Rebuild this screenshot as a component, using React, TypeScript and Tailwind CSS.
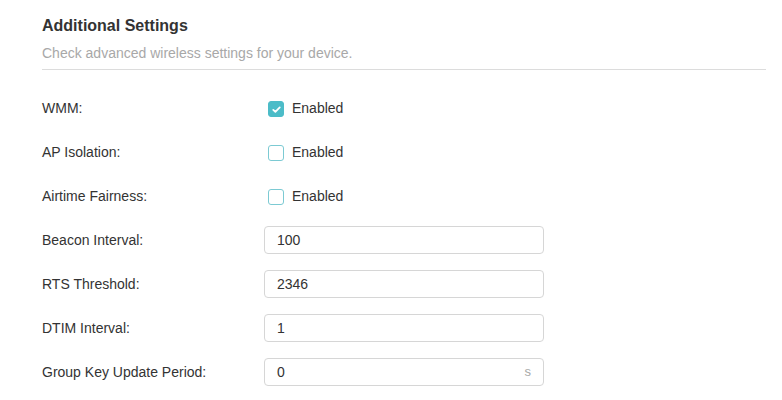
import React, { useState } from 'react';

type Field = { label: string; value: string; unit?: string };

const fields: Field[] = [
  { label: 'Beacon Interval:', value: '100' },
  { label: 'RTS Threshold:', value: '2346' },
  { label: 'DTIM Interval:', value: '1' },
  { label: 'Group Key Update Period:', value: '0', unit: 's' },
];

function Checkbox({ checked, onChange }: { checked: boolean; onChange: () => void }) {
  return (
    <button
      type="button"
      onClick={onChange}
      className={`ml-1 mt-[2px] flex h-4 w-4 items-center justify-center rounded-[3px] border ${
        checked ? 'border-[#4cbcc8] bg-[#4cbcc8]' : 'border-[#7ccad3] bg-white'
      }`}
    >
      {checked && (
        <svg viewBox="0 0 16 16" className="h-[13px] w-[13px]" fill="none" stroke="white" strokeWidth="2.2" strokeLinecap="round" strokeLinejoin="round">
          <path d="M4 8.4l2.6 2.4L12 5.4" />
        </svg>
      )}
    </button>
  );
}

export default function App() {
  const [toggles, setToggles] = useState({ wmm: true, ap: false, airtime: false });
  const [values, setValues] = useState(fields.map((f) => f.value));

  const rows = [
    { key: 'wmm' as const, label: 'WMM:' },
    { key: 'ap' as const, label: 'AP Isolation:' },
    { key: 'airtime' as const, label: 'Airtime Fairness:' },
  ];

  return (
    <div className="min-h-screen bg-white pl-[42px] pr-4 pt-[14px] font-['Liberation_Sans',Arial,sans-serif] text-[#333]">
      <h1 className="text-[16px] font-bold leading-6 text-[#333]">Additional Settings</h1>
      <p className="mt-[5px] text-[14px] leading-5 text-[#a8a8a8]">
        Check advanced wireless settings for your device.
      </p>
      <div className="mt-[6px] h-px bg-[#dcdcdc]" />

      <div className="mt-4">
        {rows.map((r) => (
          <div key={r.key} className="flex h-11 items-center text-[14px]">
            <span className="w-[222px]">{r.label}</span>
            <Checkbox
              checked={toggles[r.key]}
              onChange={() => setToggles({ ...toggles, [r.key]: !toggles[r.key] })}
            />
            <span className="ml-2">Enabled</span>
          </div>
        ))}

        {fields.map((f, i) => (
          <div key={f.label} className="flex h-11 items-center text-[14px]">
            <span className="w-[222px]">{f.label}</span>
            <div className="flex h-7 w-[280px] items-center rounded-[4px] border border-[#d6d6d6] px-3">
              <input
                className="w-full bg-transparent text-[14px] text-[#333] outline-none"
                value={values[i]}
                onChange={(e) => {
                  const next = [...values];
                  next[i] = e.target.value;
                  setValues(next);
                }}
              />
              {f.unit && <span className="ml-2 text-[13px] text-[#a8a8a8]">{f.unit}</span>}
            </div>
          </div>
        ))}
      </div>
    </div>
  );
}
